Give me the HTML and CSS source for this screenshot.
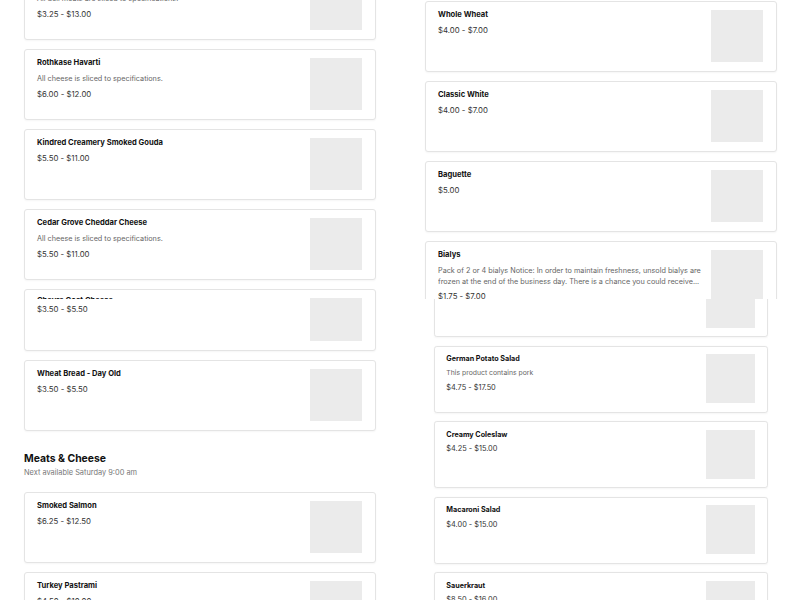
FILE: index.html
```html
<!DOCTYPE html>
<html lang="en">
<head>
<meta charset="utf-8">
<title>Menu</title>
<link rel="stylesheet" href="styles.css">
</head>
<body>
<div class="page">
  <div class="band band-top">
    <div class="grid grid-top">
      <div class="col shift-a">
        <div class="list">
          <div class="card"><div class="info"><div class="name">Boar's Head Ham</div><div class="desc">All deli meats are sliced to specifications.</div><div class="price">$3.25 - $13.00</div></div><div class="thumb"></div></div>
          <div class="card"><div class="info"><div class="name">Rothkase Havarti</div><div class="desc">All cheese is sliced to specifications.</div><div class="price">$6.00 - $12.00</div></div><div class="thumb"></div></div>
          <div class="card"><div class="info"><div class="name">Kindred Creamery Smoked Gouda</div><div class="price">$5.50 - $11.00</div></div><div class="thumb"></div></div>
          <div class="card"><div class="info"><div class="name">Cedar Grove Cheddar Cheese</div><div class="desc">All cheese is sliced to specifications.</div><div class="price">$5.50 - $11.00</div></div><div class="thumb"></div></div>
          <div class="card card-peek"><div class="info"><div class="name">Chevre Goat Cheese</div><div class="desc">All cheese is sliced to specifications.</div><div class="price">$6.50 - $13.00</div></div><div class="thumb"></div></div>
        </div>
      </div>
      <div class="col shift-b">
        <div class="list">
          <div class="card"><div class="info"><div class="name">Whole Wheat</div><div class="price">$4.00 - $7.00</div></div><div class="thumb"></div></div>
          <div class="card"><div class="info"><div class="name">Classic White</div><div class="price">$4.00 - $7.00</div></div><div class="thumb"></div></div>
          <div class="card"><div class="info"><div class="name">Baguette</div><div class="price">$5.00</div></div><div class="thumb"></div></div>
          <div class="card"><div class="info"><div class="name">Bialys</div><div class="desc desc-clamp">Pack of 2 or 4 bialys Notice: In order to maintain freshness, unsold bialys are frozen at the end of the business day. There is a chance you could receive...</div><div class="price">$1.75 - $7.00</div></div><div class="thumb"></div></div>
        </div>
      </div>
    </div>
  </div>
  <div class="band band-bottom">
    <div class="grid grid-bottom">
      <div class="col shift-c">
        <div class="list">
          <div class="card"><div class="info"><div class="name">White Bread - Day Old</div><div class="price">$3.50 - $5.50</div></div><div class="thumb"></div></div>
          <div class="card"><div class="info"><div class="name">Wheat Bread - Day Old</div><div class="price">$3.50 - $5.50</div></div><div class="thumb"></div></div>
        </div>
        <div class="section-head">
          <h2 class="section-title">Meats &amp; Cheese</h2>
          <p class="section-sub">Next available Saturday 9:00 am</p>
        </div>
        <div class="list">
          <div class="card"><div class="info"><div class="name">Smoked Salmon</div><div class="price">$6.25 - $12.50</div></div><div class="thumb"></div></div>
          <div class="card"><div class="info"><div class="name">Turkey Pastrami</div><div class="price">$4.50 - $10.00</div></div><div class="thumb"></div></div>
        </div>
      </div>
      <div class="col scaled">
        <div class="list">
          <div class="card"><div class="info"><div class="name">Potato Salad</div></div><div class="thumb"></div></div>
          <div class="card"><div class="info"><div class="name">German Potato Salad</div><div class="desc">This product contains pork</div><div class="price">$4.75 - $17.50</div></div><div class="thumb"></div></div>
          <div class="card"><div class="info"><div class="name">Creamy Coleslaw</div><div class="price">$4.25 - $15.00</div></div><div class="thumb"></div></div>
          <div class="card"><div class="info"><div class="name">Macaroni Salad</div><div class="price">$4.00 - $15.00</div></div><div class="thumb"></div></div>
          <div class="card"><div class="info"><div class="name">Sauerkraut</div><div class="price">$8.50 - $16.00</div></div><div class="thumb"></div></div>
        </div>
      </div>
    </div>
  </div>
</div>
</body>
</html>
```
FILE: styles.css
```css
* { box-sizing: border-box; }
html, body { margin: 0; padding: 0; background: #fff; }
body { font-family: "Inter", "Roboto", "Liberation Sans", sans-serif; color: #222; }

.page { width: 800px; height: 600px; overflow: hidden; }
.band { overflow: hidden; }
.band-top { height: 299px; }
.band-bottom { height: 301px; }

.grid { display: grid; align-items: start; padding: 0 24px; }
.grid-top { grid-template-columns: 352px 352px; column-gap: 49px; }
.grid-bottom { grid-template-columns: 352px 334px; column-gap: 58px; }

.list { display: flex; flex-direction: column; gap: 9px; }
.shift-a { margin-top: -31px; }
.shift-b { margin-top: 1px; }
.shift-c { margin-top: -19px; }
.scaled { zoom: 0.945; width: 353.4px; margin-top: -30.7px; }

.card {
  display: flex;
  gap: 10px;
  height: 71px;
  padding: 8px 13px 9px 12px;
  border: 1px solid #e4e4e4;
  border-radius: 3px;
  background: #fff;
  box-shadow: 0 1px 2px rgba(0,0,0,0.04);
}
.card-peek { padding-top: 6px; }
.card-peek .thumb { margin-top: 2px; }
.info { flex: 1; min-width: 0; }
.thumb { flex: none; width: 52px; height: 52px; background: #ebebeb; }

.name { font-size: 7.6px; font-weight: 700; line-height: 10px; color: #111; margin-bottom: 5px; white-space: nowrap; }
.desc { font-size: 7.25px; line-height: 11px; color: #666; margin-bottom: 5px; }
.desc-clamp { height: 22px; overflow: hidden; margin-bottom: 4px; }
.price { font-size: 7.8px; line-height: 11px; color: #333; }

.section-head { margin: 20px 0 14px; }
.section-title { margin: 0; font-size: 10.4px; line-height: 16px; font-weight: 700; color: #111; }
.section-sub { margin: 1px 0 0; font-size: 7.4px; line-height: 10px; color: #777; }
```
